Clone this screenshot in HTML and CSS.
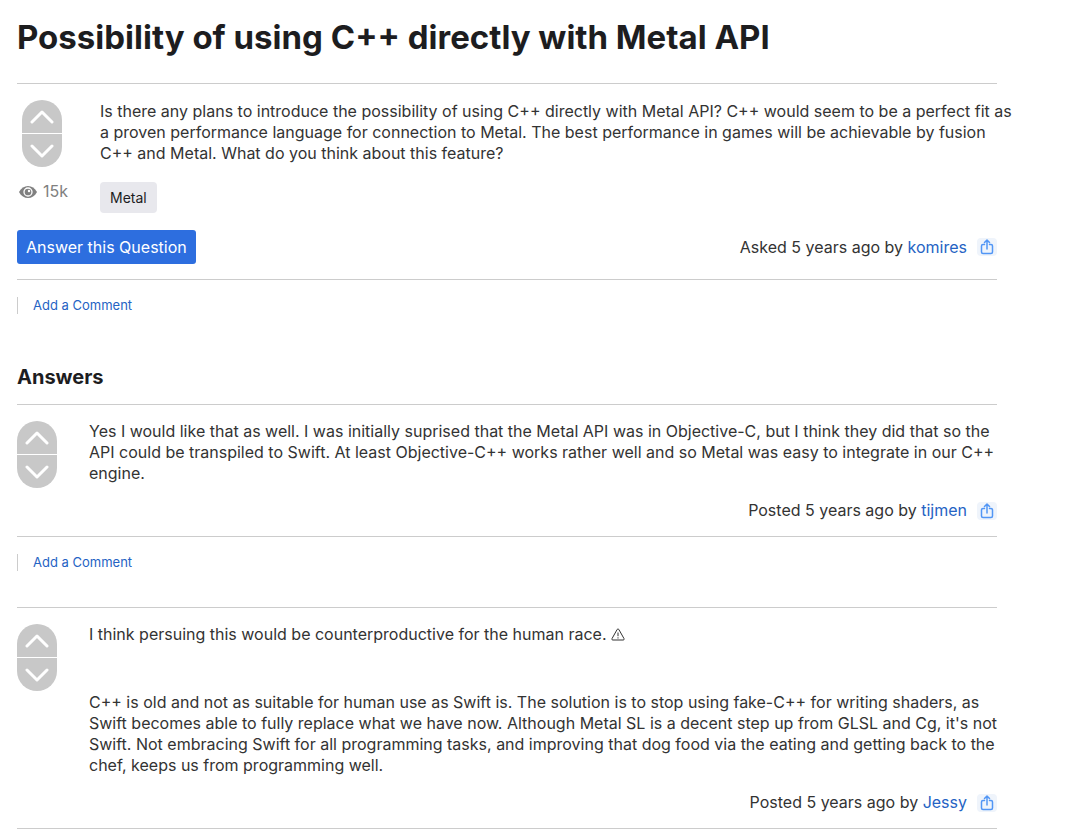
FILE: index.html
```
<!DOCTYPE html>
<html lang="en">
<head>
    <meta charset="UTF-8">
    <meta name="viewport" content="width=device-width, initial-scale=1.0">
    <title>Possibility of using C++ directly with Metal API</title>
    <link rel="stylesheet" href="styles.css">
</head>
<body>
    <svg class="symbols" aria-hidden="true">
        <symbol id="up" viewBox="0 0 24 14"><path d="M2 12 12 2l10 10"/></symbol>
        <symbol id="down" viewBox="0 0 24 14"><path d="M2 2l10 10L22 2"/></symbol>
        <symbol id="share" viewBox="0 0 20 18">
            <path d="M7.500 6.500H6Q4.500 6.500 4.500 8v6Q4.500 15.500 6 15.500h8Q15.500 15.500 15.500 14V8Q15.500 6.500 14 6.500h-1.500M10 11V2M7.500 4.500 10 2 12.500 4.500"/>
        </symbol>
    </svg>

    <main class="thread">
        <h1>Possibility of using C++ directly with Metal API</h1>

        <article class="post question">
            <div class="post-main">
                <div class="side">
                    <div class="votes">
                        <button type="button" aria-label="Vote up"><svg><use href="#up"/></svg></button>
                        <button type="button" aria-label="Vote down"><svg><use href="#down"/></svg></button>
                    </div>
                    <div class="views">
                        <svg viewBox="0 0 18 12" aria-hidden="true">
                            <path fill="#808080" d="M0 6C4-2 14-2 18 6 14 14 4 14 0 6Z"/>
                            <circle cx="9" cy="6" r="4" fill="none" stroke="#fff" stroke-width="1.300"/>
                            <circle cx="10" cy="5" r="1.200" fill="#fff"/>
                        </svg>
                        <span>15k</span>
                    </div>
                </div>
                <div class="content">
                    <p>Is there any plans to introduce the possibility of using C++ directly with Metal API? C++ would seem to be a perfect fit as<br>
                    a proven performance language for connection to Metal. The best performance in games will be achievable by fusion<br>
                    C++ and Metal. What do you think about this feature?</p>
                    <a class="tag" href="#metal">Metal</a>
                </div>
            </div>
            <div class="post-footer">
                <button type="button" class="btn">Answer this Question</button>
                <div class="byline">
                    <span>Asked 5 years ago by <a href="#komires">komires</a></span>
                    <button type="button" class="share" aria-label="Share"><svg><use href="#share"/></svg></button>
                </div>
            </div>
        </article>
        <div class="comments"><a href="#comment">Add a Comment</a></div>

        <h2>Answers</h2>

        <article class="post">
            <div class="post-main">
                <div class="side">
                    <div class="votes">
                        <button type="button" aria-label="Vote up"><svg><use href="#up"/></svg></button>
                        <button type="button" aria-label="Vote down"><svg><use href="#down"/></svg></button>
                    </div>
                </div>
                <div class="content">
                    <p>Yes I would like that as well. I was initially suprised that the Metal API was in Objective-C, but I think they did that so the API could be transpiled to Swift. At least Objective-C++ works rather well and so Metal was easy to integrate in our C++ engine.</p>
                </div>
            </div>
            <div class="post-footer">
                <div class="byline">
                    <span>Posted 5 years ago by <a href="#tijmen">tijmen</a></span>
                    <button type="button" class="share" aria-label="Share"><svg><use href="#share"/></svg></button>
                </div>
            </div>
        </article>
        <div class="comments"><a href="#comment">Add a Comment</a></div>

        <article class="post">
            <div class="post-main">
                <div class="side">
                    <div class="votes">
                        <button type="button" aria-label="Vote up"><svg><use href="#up"/></svg></button>
                        <button type="button" aria-label="Vote down"><svg><use href="#down"/></svg></button>
                    </div>
                </div>
                <div class="content">
                    <p>I think persuing this would be counterproductive for the human race. <svg class="warning" viewBox="0 0 14 13" role="img" aria-label="warning"><path d="M6.200 1.400Q7 .2 7.800 1.400L13 10.600Q13.500 12 12.200 12H1.800Q.5 12 1 10.600ZM7 4.500v3.700M7 9.300v1.200"/></svg></p>
                    <p>C++ is old and not as suitable for human use as Swift is. The solution is to stop using fake-C++ for writing shaders, as Swift becomes able to fully replace what we have now. Although Metal SL is a decent step up from GLSL and Cg, it's not Swift. Not embracing Swift for all programming tasks, and improving that dog food via the eating and getting back to the chef, keeps us from programming well.</p>
                </div>
            </div>
            <div class="post-footer">
                <div class="byline">
                    <span>Posted 5 years ago by <a href="#jessy">Jessy</a></span>
                    <button type="button" class="share" aria-label="Share"><svg><use href="#share"/></svg></button>
                </div>
            </div>
        </article>
    </main>
</body>
</html>
```
FILE: styles.css
```
* {
    box-sizing: border-box;
}
body {
    margin: 0;
    padding: 16px 17px 4px;
    background-color: #fff;
    color: #333;
    font-family: Inter, "Liberation Sans", sans-serif;
    font-size: 16px;
    line-height: 21px;
}
a {
    color: #2563c4;
    text-decoration: none;
}
a:hover {
    text-decoration: underline;
}
button {
    padding: 0;
    border: none;
    font: inherit;
    cursor: pointer;
}
.symbols {
    display: none;
}
.thread {
    max-width: 980px;
}
h1, h2 {
    margin: 0;
    color: #1d1d1f;
}
h1 {
    margin-bottom: 25px;
    font-size: 33px;
    line-height: 42px;
    font-weight: 700;
}
h2 {
    margin: 50px 0 14px;
    font-size: 20px;
    line-height: 26px;
    font-weight: 700;
}
.post {
    padding: 16px 0 15px;
    border-top: 1px solid #ccc;
    border-bottom: 1px solid #ccc;
}
.post-main {
    display: flex;
}
.side {
    flex: 0 0 72px;
}
.question .side {
    flex-basis: 83px;
}
.votes {
    display: flex;
    flex-direction: column;
    gap: 1px;
    width: 40px;
    margin-bottom: -4px;
    border-radius: 20px;
    overflow: hidden;
}
.question .votes {
    margin-left: 5px;
}
.votes button {
    display: flex;
    align-items: center;
    justify-content: center;
    height: 33px;
    background-color: #c8c8c8;
}
.votes svg {
    width: 24px;
    height: 14px;
    fill: none;
    stroke: #fff;
    stroke-width: 3px;
    stroke-linecap: round;
    stroke-linejoin: round;
}
.views {
    display: flex;
    align-items: center;
    gap: 6px;
    margin: 18px 0 0 2px;
    color: #808080;
}
.views svg {
    width: 18px;
    height: 12px;
}
.content {
    flex: 1;
    min-width: 0;
}
.question .content {
    padding-top: 1px;
}
.content p {
    margin: 0;
}
.question p {
    margin-right: -16px;
}
.content p + p {
    margin-top: 47px;
}
.tag {
    display: inline-block;
    margin-top: 18px;
    padding: 5px 10px;
    border-radius: 4px;
    background-color: #e8e8ed;
    color: #1d1d1f;
    font-size: 14px;
}
.warning {
    width: 14px;
    height: 13px;
    vertical-align: -1px;
    fill: none;
    stroke: #333;
    stroke-width: 1px;
}
.post-footer {
    display: flex;
    align-items: center;
    margin-top: 16px;
}
.question .post-footer {
    margin-top: 17px;
}
.btn {
    padding: 7px 9px 6px;
    border-radius: 3px;
    background-color: #2d6edf;
    color: #fff;
}
.byline {
    display: flex;
    align-items: center;
    gap: 10px;
    margin-left: auto;
}
.share {
    display: flex;
    border-radius: 4px;
    background-color: #eff4fb;
}
.share svg {
    width: 20px;
    height: 18px;
    fill: none;
    stroke: #5296f5;
    stroke-width: 1.500;
    stroke-linecap: round;
    stroke-linejoin: round;
}
.comments {
    margin: 17px 0 36px;
    padding-left: 15px;
    border-left: 1px solid #ccc;
    font-size: 13px;
    line-height: 17px;
}
```
